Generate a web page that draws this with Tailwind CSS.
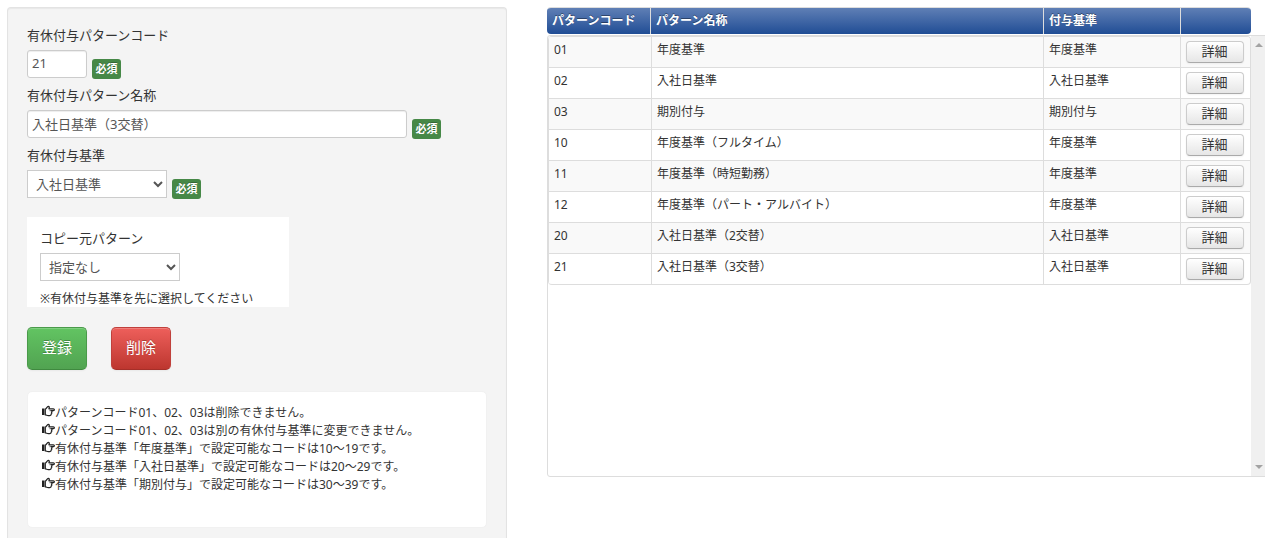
<!DOCTYPE html>
<html lang="ja">
<head>
<meta charset="utf-8">
<meta name="viewport" content="width=device-width, initial-scale=1">
<title>有休付与パターン</title>
<script src="https://cdn.jsdelivr.net/npm/@tailwindcss/browser@4"></script>
</head>
<body class="bg-white font-['Noto_Sans','Noto_Sans_CJK_JP',sans-serif] text-[13px] leading-5 text-[#333]">
<svg class="hidden" aria-hidden="true">
  <symbol id="hand" viewBox="0 0 13 12">
    <path d="M0 3.500h2.500v6.500H0z" fill="#222"/>
    <path d="M3.300 4C4.600 3.800 5 1.500 6.200 1.300c1.300 0 1.400 1.300.7 2.500h4.500c1.300 0 1.300 1.900 0 1.900H9.400c.9.300.8 1.400.1 1.700.5.500.300 1.400-.4 1.600.2 1-.5 1.600-1.500 1.600H6.200c-1.200 0-1.700-.7-2.900-.7z" fill="none" stroke="#222" stroke-width="1.200" stroke-linejoin="round"/>
    <path d="M7.500 5.700h2" stroke="#222" stroke-width=".8"/>
  </symbol>
</svg>
<main class="flex h-screen gap-10 overflow-hidden pt-[7px] pl-[7px]">
  <form class="w-[500px] shrink-0 rounded-t border border-b-0 border-[#e3e3e3] bg-[#f4f4f4] px-[19px] pt-[17px] shadow-[inset_0_1px_1px_rgba(0,0,0,0.05)]">
    <div class="h-[60px]">
      <label for="code" class="block h-[25px]">有休付与パターンコード</label>
      <div class="flex items-start gap-[5px]">
        <input id="code" type="text" value="21" class="h-7 w-[60px] rounded-[3px] border border-[#ccc] bg-white px-1 pb-[2px] text-[#555] shadow-[inset_0_1px_1px_rgba(0,0,0,0.075)]">
        <span class="mt-[9px] h-5 w-[29px] rounded-[3px] bg-[#468847] text-center text-[11px] leading-[19px] font-bold text-white [text-shadow:0_-1px_0_rgba(0,0,0,0.25)]">必須</span>
      </div>
    </div>
    <div class="h-[60px]">
      <label for="name" class="block h-[25px]">有休付与パターン名称</label>
      <div class="flex items-start gap-[5px]">
        <input id="name" type="text" value="入社日基準（3交替）" class="h-7 w-[380px] rounded-[3px] border border-[#ccc] bg-white px-1 pb-[2px] text-[#555] shadow-[inset_0_1px_1px_rgba(0,0,0,0.075)]">
        <span class="mt-[9px] h-5 w-[29px] rounded-[3px] bg-[#468847] text-center text-[11px] leading-[19px] font-bold text-white [text-shadow:0_-1px_0_rgba(0,0,0,0.25)]">必須</span>
      </div>
    </div>
    <div class="h-[60px]">
      <label for="base" class="block h-[25px]">有休付与基準</label>
      <div class="flex items-start gap-[5px]">
        <select id="base" class="h-7 w-[140px] border border-[#ccc] bg-white pl-1 text-[#555]"><option>入社日基準</option><option>年度基準</option><option>期別付与</option></select>
        <span class="mt-[9px] h-5 w-[29px] rounded-[3px] bg-[#468847] text-center text-[11px] leading-[19px] font-bold text-white [text-shadow:0_-1px_0_rgba(0,0,0,0.25)]">必須</span>
      </div>
    </div>
    <div class="mt-3 w-[262px] bg-white px-[13px] pt-[11px]">
      <label for="copy" class="block h-[25px]">コピー元パターン</label>
      <select id="copy" class="block h-7 w-[140px] border border-[#ccc] bg-white pl-1 text-[#555]"><option>指定なし</option></select>
      <p class="pt-[9px] text-xs leading-[17px]">※有休付与基準を先に選択してください</p>
    </div>
    <div class="mt-5 flex gap-6">
      <button type="submit" class="h-[43px] w-[60px] rounded-[5px] border border-[#4a9a4a] border-b-[#3f8a3f] bg-linear-to-b from-[#62c462] to-[#51a351] pb-[3px] text-[15px] text-white shadow-[inset_0_1px_0_rgba(255,255,255,0.2),0_1px_2px_rgba(0,0,0,0.05)] [text-shadow:0_-1px_0_rgba(0,0,0,0.25)]">登録</button>
      <button type="button" class="h-[43px] w-[60px] rounded-[5px] border border-[#c0403b] border-b-[#a52f29] bg-linear-to-b from-[#ee5f5b] to-[#bd362f] pb-[3px] text-[15px] text-white shadow-[inset_0_1px_0_rgba(255,255,255,0.2),0_1px_2px_rgba(0,0,0,0.05)] [text-shadow:0_-1px_0_rgba(0,0,0,0.25)]">削除</button>
    </div>
    <ul class="mt-[21px] h-[137px] rounded-[5px] border border-[#f1f1f1] bg-white px-[14px] pt-3 text-xs leading-[18px]">
      <li class="flex items-start"><svg class="mt-px h-3 w-[13px]" aria-hidden="true"><use href="#hand"/></svg>パターンコード01、02、03は削除できません。</li>
      <li class="flex items-start"><svg class="mt-px h-3 w-[13px]" aria-hidden="true"><use href="#hand"/></svg>パターンコード01、02、03は別の有休付与基準に変更できません。</li>
      <li class="flex items-start"><svg class="mt-px h-3 w-[13px]" aria-hidden="true"><use href="#hand"/></svg>有休付与基準「年度基準」で設定可能なコードは10～19です。</li>
      <li class="flex items-start"><svg class="mt-px h-3 w-[13px]" aria-hidden="true"><use href="#hand"/></svg>有休付与基準「入社日基準」で設定可能なコードは20～29です。</li>
      <li class="flex items-start"><svg class="mt-px h-3 w-[13px]" aria-hidden="true"><use href="#hand"/></svg>有休付与基準「期別付与」で設定可能なコードは30～39です。</li>
    </ul>
  </form>

  <section class="-mr-[3px] min-w-0 flex-1 text-xs">
    <div class="mr-[17px] overflow-hidden rounded-[4px] border-t border-[#ddd]">
      <table class="w-full table-fixed border-separate border-spacing-0 text-left font-bold text-white [text-shadow:0_-1px_0_rgba(0,0,0,0.4)]">
        <colgroup><col class="w-[103px]"><col><col class="w-[137px]"><col class="w-[71px]"></colgroup>
        <thead><tr class="h-[26px] bg-linear-to-b from-[#5f7fb5] to-[#204d95]">
          <th class="p-0 pl-[5px]">パターンコード</th>
          <th class="border-l border-[#ddd] p-0 pl-[5px]">パターン名称</th>
          <th class="border-l border-[#ddd] p-0 pl-[5px]">付与基準</th>
          <th class="border-l border-[#ddd] p-0" aria-label="操作"></th>
        </tr></thead>
      </table>
    </div>
    <div class="mt-px flex h-[442px] rounded-l-[3px] border border-[#ddd]">
      <div class="min-w-0 flex-1">
        <table class="w-full table-fixed border-separate border-spacing-0 overflow-hidden rounded border border-l-0 border-[#ddd] [&_tr:first-child_td]:border-t-0">
          <colgroup><col class="w-[103px]"><col><col class="w-[137px]"><col class="w-[70px]"></colgroup>
          <tbody id="rows"></tbody>
        </table>
      </div>
      <div class="flex w-4 shrink-0 flex-col items-center justify-between bg-[#f0f0f0] py-[7px]" aria-hidden="true">
        <svg class="h-1 w-2" viewBox="0 0 8 4"><path d="M4 0l4 4H0z" fill="#a3a3a3"/></svg>
        <svg class="h-1 w-2" viewBox="0 0 8 4"><path d="M4 4l4-4H0z" fill="#a3a3a3"/></svg>
      </div>
    </div>
  </section>
</main>
<script>
const rows = [
  ["01", "年度基準", "年度基準"],
  ["02", "入社日基準", "入社日基準"],
  ["03", "期別付与", "期別付与"],
  ["10", "年度基準（フルタイム）", "年度基準"],
  ["11", "年度基準（時短勤務）", "年度基準"],
  ["12", "年度基準（パート・アルバイト）", "年度基準"],
  ["20", "入社日基準（2交替）", "入社日基準"],
  ["21", "入社日基準（3交替）", "入社日基準"]
];
document.getElementById("rows").innerHTML = rows.map(([code, name, base]) => `
  <tr class="h-[31px] odd:bg-[#f9f9f9] first:h-[30px]">
    <td class="border-t border-l border-[#ddd] p-0 pt-[5px] pl-[5px] align-top">${code}</td>
    <td class="border-t border-l border-[#ddd] p-0 pt-[5px] pl-[5px] align-top">${name}</td>
    <td class="border-t border-l border-[#ddd] p-0 pt-[5px] pl-[5px] align-top">${base}</td>
    <td class="border-t border-l border-[#ddd] p-0 pt-1 pl-[5px] align-top"><button type="button" class="block h-[22px] w-[58px] rounded-[4px] border border-[#ccc] border-b-[#aaa] bg-linear-to-b from-white to-[#e6e6e6] pr-px pb-[2px] text-[13px] leading-[18px] text-[#333] shadow-[inset_0_1px_0_rgba(255,255,255,0.2),0_1px_2px_rgba(0,0,0,0.05)]">詳細</button></td>
  </tr>`).join("");
</script>
</body>
</html>
